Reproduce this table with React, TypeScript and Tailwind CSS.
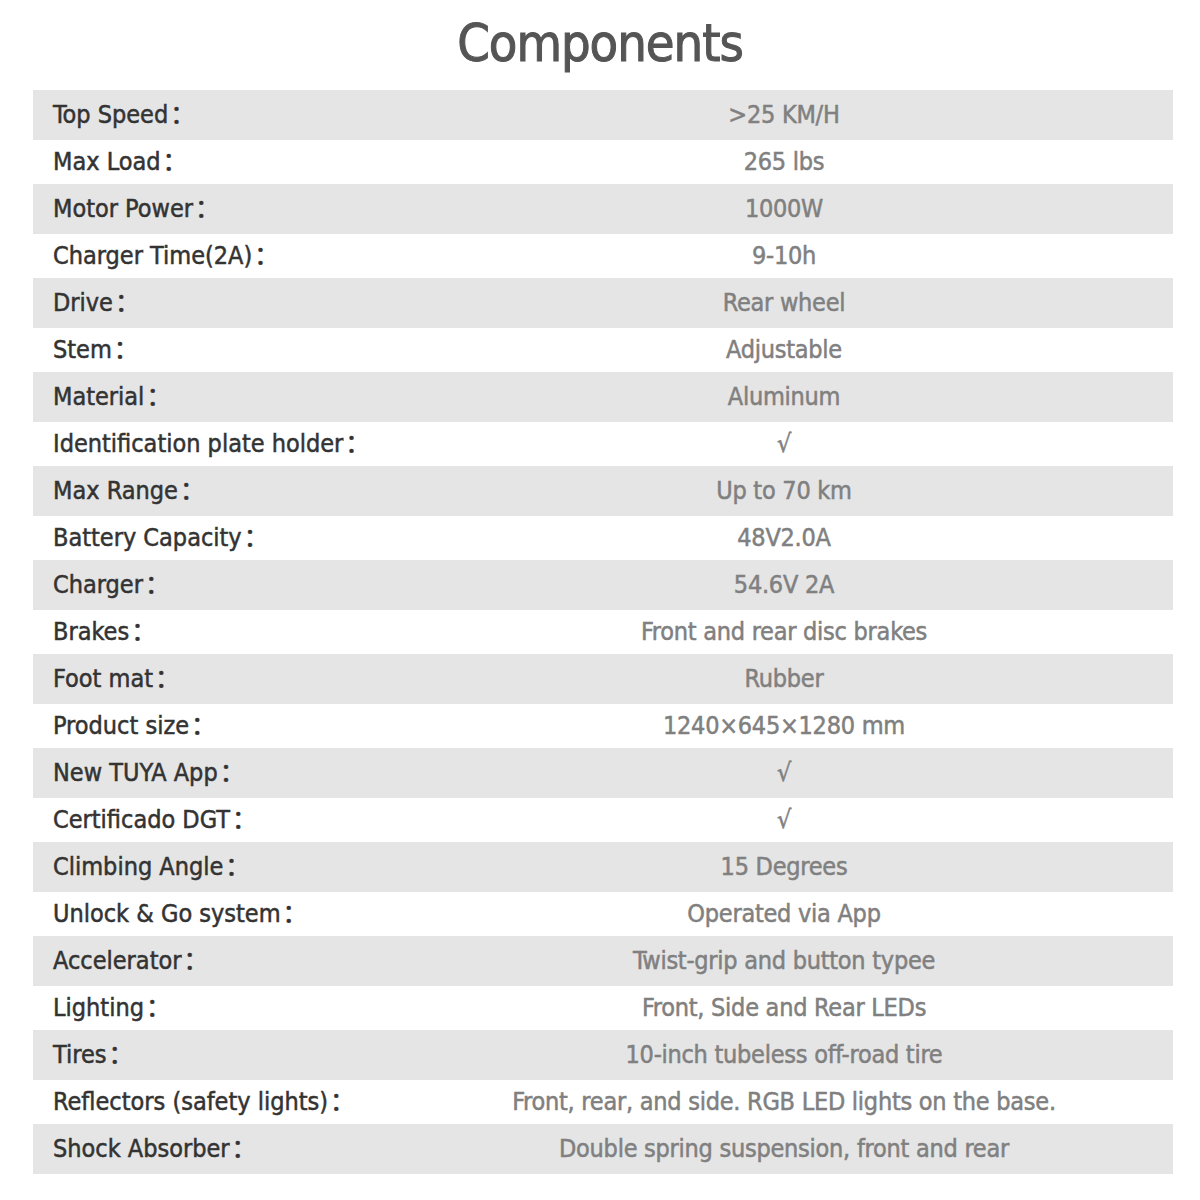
import React from 'react';

const specs: [string, string][] = [
  ['Top Speed', '>25 KM/H'],
  ['Max Load', '265 lbs'],
  ['Motor Power', '1000W'],
  ['Charger Time(2A)', '9-10h'],
  ['Drive', 'Rear wheel'],
  ['Stem', 'Adjustable'],
  ['Material', 'Aluminum'],
  ['Identification plate holder', '√'],
  ['Max Range', 'Up to 70 km'],
  ['Battery Capacity', '48V2.0A'],
  ['Charger', '54.6V 2A'],
  ['Brakes', 'Front and rear disc brakes'],
  ['Foot mat', 'Rubber'],
  ['Product size', '1240×645×1280 mm'],
  ['New TUYA App', '√'],
  ['Certificado DGT', '√'],
  ['Climbing Angle', '15 Degrees'],
  ['Unlock & Go system', 'Operated via App'],
  ['Accelerator', 'Twist-grip and button typee'],
  ['Lighting', 'Front, Side and Rear LEDs'],
  ['Tires', '10-inch tubeless off-road tire'],
  ['Reflectors (safety lights)', 'Front, rear, and side. RGB LED lights on the base.'],
  ['Shock Absorber', 'Double spring suspension, front and rear'],
];

const font = { fontFamily: '"DejaVu Sans Condensed", "DejaVu Sans", "Noto Sans CJK SC", sans-serif' };

export default function App() {
  return (
    <div className="w-[1200px] h-[1200px] bg-white" style={font}>
      <h1 className="h-[90px] pb-1 flex items-center justify-center text-[52px] text-[#555] tracking-[-0.02em] [-webkit-text-stroke:1px_#555]">
        Components
      </h1>
      <div className="ml-[33px] w-[1140px] flex flex-col">
        {specs.map(([label, value], i) => (
          <div
            key={label}
            className={
              i % 2 === 0
                ? 'flex items-center h-[50px] bg-[#e5e5e5]'
                : 'flex items-center h-[44px] bg-white'
            }
          >
            <div className="w-[362px] pl-5 text-[25px] text-[#333] whitespace-nowrap [-webkit-text-stroke:0.5px_#333]">
              {label}
              <span className="ml-0.5">：</span>
            </div>
            <div className="flex-1 text-center text-[25px] tracking-[-0.01em] text-[#808080] whitespace-nowrap [-webkit-text-stroke:0.5px_#808080]">
              {value}
            </div>
          </div>
        ))}
      </div>
    </div>
  );
}
